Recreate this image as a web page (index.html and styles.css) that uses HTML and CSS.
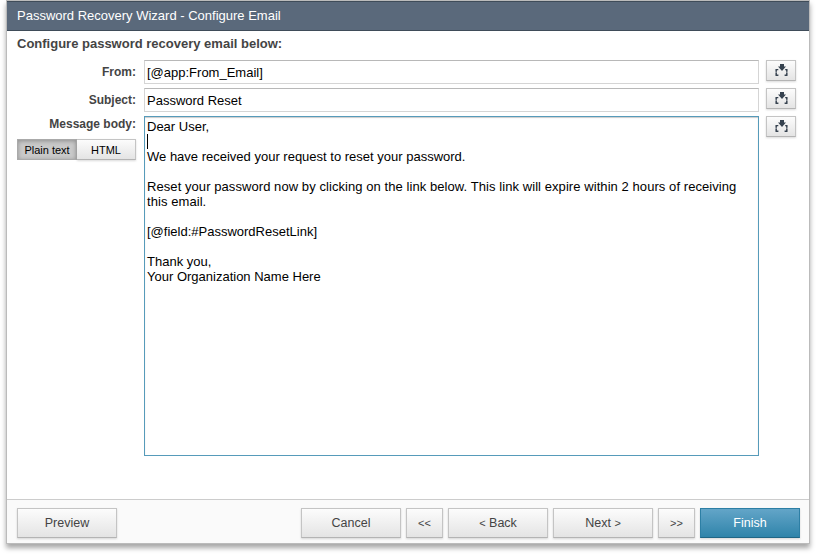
FILE: index.html
```
<!DOCTYPE html>
<html lang="en">
<head>
  <meta charset="UTF-8">
  <title>Password Recovery Wizard</title>
  <link rel="stylesheet" href="styles.css">
</head>
<body>
  <svg class="symbols" width="0" height="0">
    <symbol id="insert" viewBox="0 0 13 12">
      <path d="M5 0h4v2.500h2L7 7 3 2.500h2z"/>
      <path d="M3.300 5.600H1.200v2.200M1.200 8.600v2.700h2.200M10.200 5.600h1.600v2.200M11.800 8.600v2.700H9.600" fill="none" stroke="#36424f" stroke-width="1.400"/>
      <path d="M1.200 5.600v5.700M11.800 5.600v5.700" fill="none" stroke="#36424f" stroke-opacity="0.4"/>
    </symbol>
  </svg>
  <form class="wizard">
    <h1>Password Recovery Wizard - Configure Email</h1>
    <div class="content">
      <h2>Configure password recovery email below:</h2>
      <div class="row">
        <label for="from">From:</label>
        <input type="text" id="from" value="[@app:From_Email]">
        <button type="button" class="insert"><svg><use href="#insert"/></svg></button>
      </div>
      <div class="row">
        <label for="subject">Subject:</label>
        <input type="text" id="subject" value="Password Reset">
        <button type="button" class="insert"><svg><use href="#insert"/></svg></button>
      </div>
      <div class="row message">
        <div class="side">
          <label>Message body:</label>
          <div class="toggle">
            <button type="button" class="active">Plain text</button>
            <button type="button">HTML</button>
          </div>
        </div>
        <div class="editor" contenteditable="true" spellcheck="false">
          <p>Dear User,</p>
          <span class="caret"></span>
          <p>We have received your request to reset your password.</p>
          <p class="wide">Reset your password now by clicking on the link below. This link will expire within 2 hours of receiving this email.</p>
          <p>[@field:#PasswordResetLink]</p>
          <p>Thank you,<br>Your Organization Name Here</p>
        </div>
        <button type="button" class="insert"><svg><use href="#insert"/></svg></button>
      </div>
    </div>
    <div class="footer">
      <button type="button" class="btn preview">Preview</button>
      <button type="button" class="btn">Cancel</button>
      <button type="button" class="btn small">&lt;&lt;</button>
      <button type="button" class="btn"><span class="arrow">&lt;</span> Back</button>
      <button type="button" class="btn">Next <span class="arrow">&gt;</span></button>
      <button type="button" class="btn small">&gt;&gt;</button>
      <button type="button" class="btn finish">Finish</button>
    </div>
  </form>
</body>
</html>
```
FILE: styles.css
```
* {
  box-sizing: border-box;
}
body {
  height: 555px;
  margin: 0;
  background: #fff;
  font-family: "Liberation Sans", Arial, sans-serif;
  font-size: 13px;
  color: #444;
}
.symbols {
  position: absolute;
}
.wizard {
  display: flex;
  flex-direction: column;
  width: 804px;
  height: 544px;
  margin-left: 6px;
  border: 1px solid #bbb;
  box-shadow: 0 4px 5px rgba(0, 0, 0, 0.35);
}
h1 {
  height: 30px;
  margin: 0;
  padding-left: 10px;
  border-top: 1px solid #3f4c59;
  border-bottom: 1px solid #3f4c59;
  background: #5a697b;
  color: #fff;
  font: 13px/28px "Liberation Sans", Arial, sans-serif;
}
h2 {
  height: 29px;
  margin: 0;
  font-size: 13px;
  line-height: 26px;
}
.content {
  flex: 1;
  padding-left: 10px;
}
.row {
  display: flex;
  align-items: flex-start;
  margin-bottom: 4px;
}
label {
  width: 119px;
  margin-right: 8px;
  font-size: 12px;
  font-weight: bold;
  line-height: 24px;
  text-align: right;
}
input[type="text"],
.editor {
  width: 615px;
  height: 24px;
  padding: 1px 2px 0;
  border: 1px solid #d5d5d5;
  border-top-color: #b8b8b8;
  outline: none;
  background: #fff;
  color: #000;
  font: 13px/15px "Liberation Sans", Arial, sans-serif;
}
.editor {
  position: relative;
  height: 340px;
  padding: 2px;
  border: 1px solid #569bba;
  box-shadow: inset 0 1px 1px #ccc;
}
.editor p {
  margin: 0 0 15px;
}
.editor .wide {
  padding-right: 8px;
  letter-spacing: 0.07px;
}
.caret {
  position: absolute;
  top: 17px;
  left: 2px;
  width: 1px;
  height: 15px;
  background: #000;
}
.side {
  width: 119px;
  margin-right: 8px;
}
.side label {
  display: block;
  margin: 0;
  line-height: 16px;
}
button {
  padding: 0;
  border: 1px solid #c4c4c4;
  border-bottom-color: #b4b4b4;
  background: linear-gradient(#fcfcfc, #e4e4e4);
  box-shadow: 0 1px 2px rgba(0, 0, 0, 0.15);
  color: #444;
  font-family: "Liberation Sans", Arial, sans-serif;
}
.insert {
  width: 30px;
  height: 21px;
  margin-left: 7px;
}
.insert svg {
  display: block;
  width: 13px;
  height: 12px;
  margin: 0 auto 1px 8px;
  fill: #36424f;
}
.toggle {
  display: flex;
  margin-top: 7px;
}
.toggle button {
  width: 59px;
  height: 21px;
  border-left: 0;
  color: #000;
  font-size: 11px;
}
.toggle .active {
  width: 60px;
  border: 1px solid #aaa;
  background: #c9c9c9;
  box-shadow: inset 0 1px 4px rgba(0, 0, 0, 0.3);
}
.footer {
  display: flex;
  gap: 5px;
  height: 44px;
  padding: 8px 9px 0 10px;
  border-top: 1px solid #ccc;
  background: #fafafa;
}
.btn {
  width: 100px;
  height: 30px;
  font-size: 12.5px;
}
.small {
  width: 37px;
  font-size: 11px;
}
.arrow {
  font-size: 11px;
}
.preview {
  margin-right: auto;
}
.finish {
  border-color: #2d7fa5;
  border-bottom-color: #206685;
  background: linear-gradient(#63a5c8, #2f84aa);
  color: #fff;
}
```
